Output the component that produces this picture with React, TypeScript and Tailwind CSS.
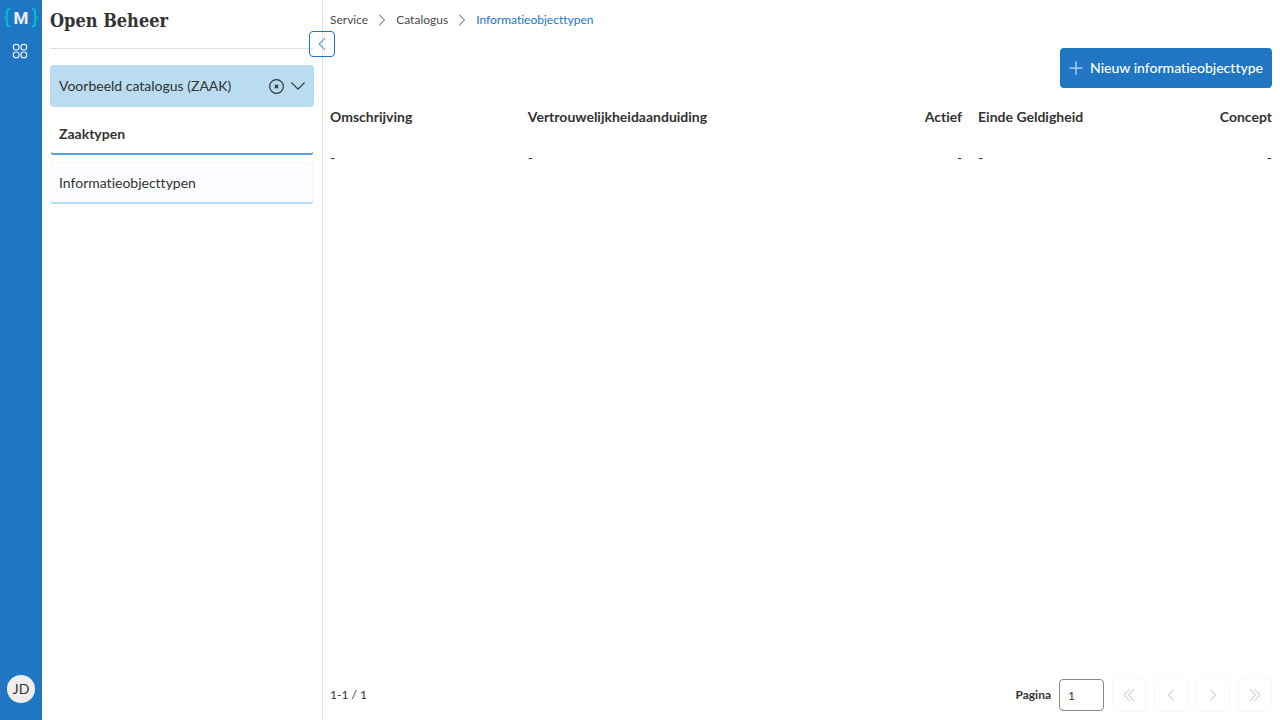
import { useState } from "react";
import {
  HiOutlineChevronDoubleLeft,
  HiOutlineChevronDoubleRight,
  HiOutlineChevronDown,
  HiOutlineChevronLeft,
  HiOutlineChevronRight,
  HiOutlinePlus,
} from "react-icons/hi2";

interface Column {
  key: string;
  label: string;
  width: string;
  align: string;
}

const columns: Column[] = [
  { key: "omschrijving", label: "Omschrijving", width: "w-[21%]", align: "text-left" },
  { key: "vertrouwelijkheid", label: "Vertrouwelijkheidaanduiding", width: "w-[30%]", align: "text-left" },
  { key: "actief", label: "Actief", width: "w-[17.8%]", align: "text-right" },
  { key: "einde", label: "Einde Geldigheid", width: "w-[18%]", align: "text-left" },
  { key: "concept", label: "Concept", width: "w-[13.2%]", align: "text-right" },
];

const rows: Record<string, string>[] = [{}];

const pagerButtons = [
  { label: "Eerste pagina", Icon: HiOutlineChevronDoubleLeft },
  { label: "Vorige pagina", Icon: HiOutlineChevronLeft },
  { label: "Volgende pagina", Icon: HiOutlineChevronRight },
  { label: "Laatste pagina", Icon: HiOutlineChevronDoubleRight },
];

function Logo() {
  return (
    <svg viewBox="0 0 34 20" className="h-5 w-[34px]" fill="none" aria-hidden="true">
      <path d="M6 1.2H5Q3 1.2 3 3.2V7.2Q3 9.7 .5 9.7Q3 9.7 3 12.2V16.2Q3 18.2 5 18.2H6" stroke="#00bfcb" strokeWidth="2" />
      <path d="M28 1.2H29Q31 1.2 31 3.2V7.2Q31 9.7 33.5 9.7Q31 9.7 31 12.2V16.2Q31 18.2 29 18.2H28" stroke="#00bfcb" strokeWidth="2" />
      <text x="17" y="15.6" textAnchor="middle" fill="#eeeeee" className="font-[Roboto,sans-serif] text-[17px] font-bold">
        M
      </text>
    </svg>
  );
}

function GridIcon() {
  return (
    <svg viewBox="0 0 16 16" className="size-4" fill="none" stroke="currentColor" strokeWidth="1.2" aria-hidden="true">
      <rect x="1.4" y="1.4" width="5.6" height="5.6" rx="2.2" />
      <rect x="9" y="1.4" width="5.6" height="5.6" rx="2.2" />
      <rect x="1.4" y="9" width="5.6" height="5.6" rx="2.2" />
      <rect x="9" y="9" width="5.6" height="5.6" rx="2.2" />
    </svg>
  );
}

function ClearIcon() {
  return (
    <svg viewBox="0 0 16 16" className="size-4" fill="none" stroke="currentColor" aria-hidden="true">
      <circle cx="8.5" cy="8.5" r="6.8" strokeWidth="1.2" />
      <path d="M6.8 6.8L10.2 10.2M10.2 6.8L6.8 10.2" strokeWidth="1.4" />
    </svg>
  );
}

function Toolbar() {
  return (
    <nav className="flex w-[42px] shrink-0 flex-col items-center bg-[#2176c4] pt-2 pb-[17px]">
      <a href="#" aria-label="Home">
        <Logo />
      </a>
      <button type="button" aria-label="Overzicht" className="mt-[15px] mr-0.5 text-[#eeeeee]">
        <GridIcon />
      </button>
      <button type="button" aria-label="Profiel" className="mt-auto size-7 rounded-full bg-[#eeeeee] text-sm text-[#333333]">
        JD
      </button>
    </nav>
  );
}

function Sidebar() {
  return (
    <aside className="w-[280px] shrink-0 px-2">
      <h2 className="border-b border-[#e0e0e0] pt-[7px] pb-[13px] font-['DejaVu_Serif_Condensed','DejaVu_Serif',serif] text-lg font-bold">
        Open Beheer
      </h2>
      <div className="mt-4 flex h-[42px] items-center gap-1 rounded bg-[#badcf0] pr-1.5 pl-[9px]">
        <button type="button" className="flex-1 text-left">
          Voorbeeld catalogus (ZAAK)
        </button>
        <button type="button" aria-label="Wis selectie">
          <ClearIcon />
        </button>
        <button type="button" aria-label="Toon opties">
          <HiOutlineChevronDown className="size-5" />
        </button>
      </div>
      <nav className="mt-1.5 flex flex-col gap-[7px]">
        <a
          href="#"
          className="flex h-[42px] items-center rounded border border-b-2 border-transparent border-b-[#5a9fd8] px-2 font-bold"
        >
          Zaaktypen
        </a>
        <a
          href="#"
          className="flex h-[42px] items-center rounded border border-b-2 border-[#f2f7fc] border-b-[#badcf0] bg-[#fbfcff] px-2"
        >
          Informatieobjecttypen
        </a>
      </nav>
    </aside>
  );
}

function Breadcrumbs() {
  return (
    <nav aria-label="Kruimelpad" className="flex h-10 items-center gap-1.5 text-xs text-[#4b4b4b]">
      <a href="#">Service</a>
      <HiOutlineChevronRight className="size-4" />
      <a href="#">Catalogus</a>
      <HiOutlineChevronRight className="size-4" />
      <a href="#" className="text-[#2176c4]">
        Informatieobjecttypen
      </a>
    </nav>
  );
}

function Paginator() {
  const [page, setPage] = useState("1");

  return (
    <footer className="mt-auto flex items-center pb-2 text-xs">
      <span>1-1 / 1</span>
      <label htmlFor="page" className="ml-auto font-bold">
        Pagina
      </label>
      <input
        id="page"
        value={page}
        onChange={(e) => setPage(e.target.value)}
        className="ml-2 h-8 w-[45px] rounded border border-[#888888] px-2"
      />
      {pagerButtons.map(({ label, Icon }) => (
        <button
          key={label}
          type="button"
          disabled
          aria-label={label}
          className="ml-2 flex size-[34px] items-center justify-center rounded border border-[#f7f7f7] text-[#d8d8d8]"
        >
          <Icon className="size-[18px]" />
        </button>
      ))}
    </footer>
  );
}

export default function App() {
  return (
    <div className="flex min-h-screen bg-white font-[Lato,sans-serif] text-sm text-[#333333] [font-variant-ligatures:none]">
      <Toolbar />
      <Sidebar />
      <main className="relative flex flex-1 flex-col border-l border-[#e0e0e0] pr-2 pl-[7px]">
        {/* sidebar toggle, sits on the divider */}
        <button
          type="button"
          aria-label="Zijbalk inklappen"
          className="absolute top-[31px] -left-3.5 flex size-[26px] items-center justify-center rounded border border-[#2176c4] text-[#5a9fd8]"
        >
          <HiOutlineChevronLeft className="size-[18px]" />
        </button>
        <Breadcrumbs />
        <button
          type="button"
          className="mt-2 flex h-10 items-center gap-1 self-end rounded bg-[#2176c4] pr-[9px] pl-1.5 font-medium text-white"
        >
          <HiOutlinePlus className="size-5 text-[#c3dbf0]" />
          Nieuw informatieobjecttype
        </button>
        <table className="mt-2 w-full table-fixed">
          <thead>
            <tr className="h-[42px]">
              {columns.map((col) => (
                <th key={col.key} className={`${col.width} ${col.align} pr-4 font-bold last:pr-0`}>
                  {col.label}
                </th>
              ))}
            </tr>
          </thead>
          <tbody>
            {rows.map((row, i) => (
              <tr key={i} className="h-10">
                {columns.map((col) => (
                  <td key={col.key} className={`${col.align} pr-4 last:pr-0`}>
                    {row[col.key] ?? "-"}
                  </td>
                ))}
              </tr>
            ))}
          </tbody>
        </table>
        <Paginator />
      </main>
    </div>
  );
}
